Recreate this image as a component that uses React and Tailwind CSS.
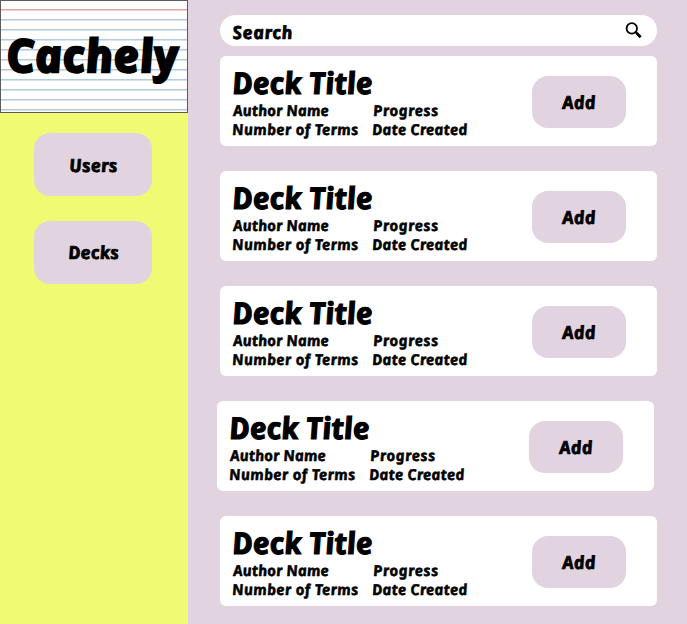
import React from "react";

const decks = [{ id: 1 }, { id: 2 }, { id: 3 }, { id: 4, shifted: true }, { id: 5 }];
const blueRules = [19.5, 29.5, 39.5, 49.5, 59.5, 69.5, 79.5, 89.5, 99.5, 109.5];

function Logo() {
  return (
    <div className="relative h-[113px] w-[187.5px] border border-[#5b5b5b] bg-white">
      <svg className="absolute inset-0" width="186" height="111" viewBox="1 1 186 111" aria-hidden="true">
        <path d="M0 9.8H188" stroke="#e5a5a3" strokeWidth="1.6" />
        {blueRules.map((y) => (
          <path key={y} d={`M0 ${y + 0.3}H188`} stroke="#b4cbdc" strokeWidth="1.5" />
        ))}
      </svg>
      <h1 className="relative flex h-full items-center justify-center pr-[4px] pb-[4px]">
        <span className="inline-block skew-x-[8deg] whitespace-nowrap text-[45px] leading-[56px] tracking-[1px] [-webkit-text-stroke:2.6px_black]">Cachely</span>
      </h1>
    </div>
  );
}

function DeckCard({ shifted }) {
  return (
    <article className={`flex h-[90px] w-[437px] items-start justify-between rounded-[6px] bg-white pr-[31px] pl-[13px] ${shifted ? "-ml-[3px]" : ""}`}>
      <div>
        <h2 className="mt-[8px] -ml-px h-[37px] origin-left skew-x-[8deg] text-[30px] leading-[37px] whitespace-nowrap tracking-[0.1px] [-webkit-text-stroke:1.2px_black]">Deck Title</h2>
        <div className="grid grid-cols-[140px_110px] text-[15px] leading-[18.8px] whitespace-nowrap [-webkit-text-stroke:0.5px_black]">
          <span className="origin-left skew-x-[8deg] tracking-[0.08px]">Author Name</span>
          <span className="origin-left skew-x-[8deg] tracking-[0.5px]">Progress</span>
          <span className="-ml-px origin-left skew-x-[8deg] tracking-[0.28px]">Number of Terms</span>
          <span className="-ml-px origin-left skew-x-[8deg] tracking-[0.16px]">Date Created</span>
        </div>
      </div>
      <button className="mt-[20px] h-[52px] w-[94px] rounded-[16px] bg-[#e1d3df] text-[18px]">
        <span className="inline-block skew-x-[8deg] pt-px pr-px tracking-[0.3px] [-webkit-text-stroke:0.7px_black]">Add</span>
      </button>
    </article>
  );
}

export default function App() {
  return (
    <div className="flex h-[624px] w-[687px] overflow-hidden bg-[#e1d3df] font-['Noto_Sans',sans-serif] font-bold italic text-black">
      <aside className="w-[187.5px] shrink-0 bg-[#f1fa73]">
        <Logo />
        <nav className="mt-[20.4px] flex flex-col items-center gap-[24.6px] pr-[1.2px] text-[18px]">
          <button className="h-[63px] w-[118.5px] rounded-[16px] bg-[#e1d3df]">
            <span className="inline-block skew-x-[8deg] pt-[2px] tracking-[0.2px] [-webkit-text-stroke:0.7px_black]">Users</span>
          </button>
          <button className="h-[63px] w-[118.5px] rounded-[16px] bg-[#e1d3df]">
            <span className="inline-block skew-x-[8deg] pt-px tracking-[0.2px] [-webkit-text-stroke:0.7px_black]">Decks</span>
          </button>
        </nav>
      </aside>
      <main className="pt-[14.5px] pl-[32.5px]">
        <div className="flex h-[31px] w-[437px] items-center justify-between rounded-full bg-white pr-[15px] pl-[12px] text-[18px]">
          <span className="inline-block skew-x-[8deg] pt-[4px] tracking-[0.6px] [-webkit-text-stroke:0.7px_black]">Search</span>
          <svg width="17" height="17" viewBox="0 0 17 17" fill="none" stroke="black" aria-hidden="true">
            <circle cx="6.8" cy="6.4" r="5.2" strokeWidth="1.8" />
            <path d="M10.5 10L12 11.5" strokeWidth="1.8" />
            <path d="M11.5 11L15.7 15.2" strokeWidth="2.8" />
          </svg>
        </div>
        <div className="mt-[10.9px] flex flex-col gap-[24.9px]">
          {decks.map((deck) => (
            <DeckCard key={deck.id} shifted={deck.shifted} />
          ))}
        </div>
      </main>
    </div>
  );
}
